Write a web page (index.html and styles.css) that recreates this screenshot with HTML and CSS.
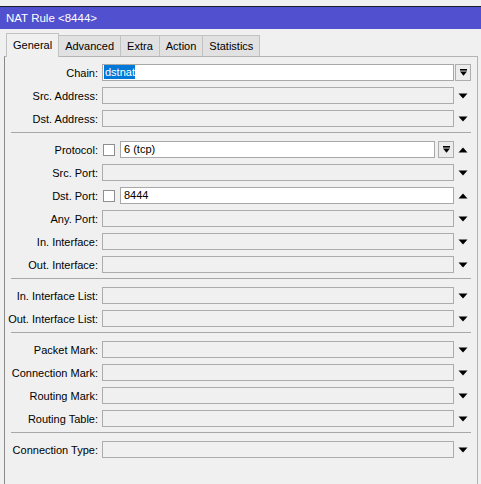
FILE: index.html
```html
<!DOCTYPE html>
<html>
<head>
<meta charset="utf-8">
<link rel="stylesheet" href="styles.css">
</head>
<body>
<div class="win">
  <div class="topgap"></div>
  <div class="title">NAT Rule &lt;8444&gt;</div>
  <div class="tabs">
    <div class="tab active">General</div>
    <div class="tab">Advanced</div>
    <div class="tab">Extra</div>
    <div class="tab">Action</div>
    <div class="tab">Statistics</div>
  </div>
  <div class="panel">
    <div class="section">
      <div class="row">
        <div class="label">Chain:</div>
        <div class="ctrl"><div class="input on"><span class="sel">dstnat</span></div></div>
        <div class="side"><div class="btn"><svg width="9" height="9" viewBox="0 0 9 9"><rect x="1" y="1" width="7" height="1.6" fill="#000"/><polygon points="1,3.6 8,3.6 4.5,7.8" fill="#000"/></svg></div></div>
      </div>
      <div class="row">
        <div class="label">Src. Address:</div>
        <div class="ctrl"><div class="input"></div></div>
        <div class="side"><svg class="arr" width="10" height="6" viewBox="0 0 10 6"><polygon points="0.5,0.5 9.5,0.5 5,5.5" fill="#000"/></svg></div>
      </div>
      <div class="row">
        <div class="label">Dst. Address:</div>
        <div class="ctrl"><div class="input"></div></div>
        <div class="side"><svg class="arr" width="10" height="6" viewBox="0 0 10 6"><polygon points="0.5,0.5 9.5,0.5 5,5.5" fill="#000"/></svg></div>
      </div>
    </div>
    <div class="sep"></div>
    <div class="section">
      <div class="row">
        <div class="label">Protocol:</div>
        <div class="ctrl"><div class="check"></div><div class="input on">6 (tcp)</div><div class="btn inl"><svg width="9" height="9" viewBox="0 0 9 9"><rect x="1" y="1" width="7" height="1.6" fill="#000"/><polygon points="1,3.6 8,3.6 4.5,7.8" fill="#000"/></svg></div></div>
        <div class="side"><svg class="arr" width="10" height="6" viewBox="0 0 10 6"><polygon points="0.5,5.5 9.5,5.5 5,0.5" fill="#000"/></svg></div>
      </div>
      <div class="row">
        <div class="label">Src. Port:</div>
        <div class="ctrl"><div class="input"></div></div>
        <div class="side"><svg class="arr" width="10" height="6" viewBox="0 0 10 6"><polygon points="0.5,0.5 9.5,0.5 5,5.5" fill="#000"/></svg></div>
      </div>
      <div class="row">
        <div class="label">Dst. Port:</div>
        <div class="ctrl"><div class="check"></div><div class="input on">8444</div></div>
        <div class="side"><svg class="arr" width="10" height="6" viewBox="0 0 10 6"><polygon points="0.5,5.5 9.5,5.5 5,0.5" fill="#000"/></svg></div>
      </div>
      <div class="row">
        <div class="label">Any. Port:</div>
        <div class="ctrl"><div class="input"></div></div>
        <div class="side"><svg class="arr" width="10" height="6" viewBox="0 0 10 6"><polygon points="0.5,0.5 9.5,0.5 5,5.5" fill="#000"/></svg></div>
      </div>
      <div class="row">
        <div class="label">In. Interface:</div>
        <div class="ctrl"><div class="input"></div></div>
        <div class="side"><svg class="arr" width="10" height="6" viewBox="0 0 10 6"><polygon points="0.5,0.5 9.5,0.5 5,5.5" fill="#000"/></svg></div>
      </div>
      <div class="row">
        <div class="label">Out. Interface:</div>
        <div class="ctrl"><div class="input"></div></div>
        <div class="side"><svg class="arr" width="10" height="6" viewBox="0 0 10 6"><polygon points="0.5,0.5 9.5,0.5 5,5.5" fill="#000"/></svg></div>
      </div>
    </div>
    <div class="sep"></div>
    <div class="section">
      <div class="row">
        <div class="label">In. Interface List:</div>
        <div class="ctrl"><div class="input"></div></div>
        <div class="side"><svg class="arr" width="10" height="6" viewBox="0 0 10 6"><polygon points="0.5,0.5 9.5,0.5 5,5.5" fill="#000"/></svg></div>
      </div>
      <div class="row">
        <div class="label">Out. Interface List:</div>
        <div class="ctrl"><div class="input"></div></div>
        <div class="side"><svg class="arr" width="10" height="6" viewBox="0 0 10 6"><polygon points="0.5,0.5 9.5,0.5 5,5.5" fill="#000"/></svg></div>
      </div>
    </div>
    <div class="sep"></div>
    <div class="section">
      <div class="row">
        <div class="label">Packet Mark:</div>
        <div class="ctrl"><div class="input"></div></div>
        <div class="side"><svg class="arr" width="10" height="6" viewBox="0 0 10 6"><polygon points="0.5,0.5 9.5,0.5 5,5.5" fill="#000"/></svg></div>
      </div>
      <div class="row">
        <div class="label">Connection Mark:</div>
        <div class="ctrl"><div class="input"></div></div>
        <div class="side"><svg class="arr" width="10" height="6" viewBox="0 0 10 6"><polygon points="0.5,0.5 9.5,0.5 5,5.5" fill="#000"/></svg></div>
      </div>
      <div class="row">
        <div class="label">Routing Mark:</div>
        <div class="ctrl"><div class="input"></div></div>
        <div class="side"><svg class="arr" width="10" height="6" viewBox="0 0 10 6"><polygon points="0.5,0.5 9.5,0.5 5,5.5" fill="#000"/></svg></div>
      </div>
      <div class="row">
        <div class="label">Routing Table:</div>
        <div class="ctrl"><div class="input"></div></div>
        <div class="side"><svg class="arr" width="10" height="6" viewBox="0 0 10 6"><polygon points="0.5,0.5 9.5,0.5 5,5.5" fill="#000"/></svg></div>
      </div>
    </div>
    <div class="sep"></div>
    <div class="section">
      <div class="row">
        <div class="label">Connection Type:</div>
        <div class="ctrl"><div class="input"></div></div>
        <div class="side"><svg class="arr" width="10" height="6" viewBox="0 0 10 6"><polygon points="0.5,0.5 9.5,0.5 5,5.5" fill="#000"/></svg></div>
      </div>
    </div>
  </div>
</div>
</body>
</html>
```

FILE: styles.css
```css
html, body {
  margin: 0;
  padding: 0;
  background: #f0f0f0;
}
body {
  font-family: "Liberation Sans", Arial, sans-serif;
  font-size: 11px;
  color: #000;
}
.win {
  display: flex;
  flex-direction: column;
  height: 484px;
  overflow: hidden;
}
.topgap {
  height: 6px;
  background: #f0f0f0;
}
.title {
  height: 22px;
  border-top: 1px solid #1e1e2a;
  background: #5151cf;
  color: #fff;
  font-size: 11.5px;
  line-height: 22px;
  padding-left: 6px;
}
.tabs {
  display: flex;
  align-items: flex-end;
  padding: 4px 0 0 6px;
  height: 23px;
  position: relative;
  z-index: 2;
}
.tab {
  height: 20px;
  line-height: 20px;
  padding: 0 6px;
  background: #e1e1e1;
  border: 1px solid #c2c2c2;
  border-bottom: none;
  margin-left: -1px;
}
.tab:first-child {
  margin-left: 0;
}
.tab.active {
  height: 23px;
  line-height: 22px;
  background: #f0f0f0;
  border-color: #c2c2c2;
  margin-bottom: -1px;
  position: relative;
  z-index: 3;
}
.panel {
  flex: 1;
  margin: 0 3px 0 4px;
  border: 1px solid #b4b4b4;
  border-left-color: #8a8a8a;
  border-bottom: none;
  padding-top: 4px;
}
.section {
  display: flex;
  flex-direction: column;
}
.row {
  display: flex;
  align-items: center;
  height: 23px;
  padding-right: 6px;
}
.label {
  width: 93px;
  margin-right: 4px;
  text-align: right;
  white-space: nowrap;
}
.ctrl {
  flex: 1;
  display: flex;
  align-items: center;
}
.input {
  flex: 1;
  height: 15px;
  border: 1px solid #acacac;
  background: #f0f0f0;
  line-height: 15px;
  padding-left: 3px;
  box-sizing: content-box;
  white-space: nowrap;
  overflow: hidden;
}
.input.on {
  background: #fff;
  border-color: #a8a8a8;
}
.sel {
  background: #0078d7;
  color: #fff;
  padding: 1px 0;
  margin-left: -2px;
  padding-left: 1px;
}
.check {
  width: 10px;
  height: 10px;
  border: 1px solid #8f8f8f;
  background: #fff;
  margin: 0 5px 0 1px;
}
.btn {
  width: 14px;
  height: 15px;
  border: 1px solid #adadad;
  background: #ececec;
  display: flex;
  align-items: center;
  justify-content: center;
  margin-left: 1px;
}
.btn.inl {
  margin-left: 3px;
}
.side {
  width: 17px;
  display: flex;
  align-items: center;
  justify-content: center;
}
.side .arr {
  margin-left: 1px;
}
.sep {
  height: 0;
  border-top: 1px solid #a8a8a8;
  margin: 2px 6px 5px 6px;
}
```
